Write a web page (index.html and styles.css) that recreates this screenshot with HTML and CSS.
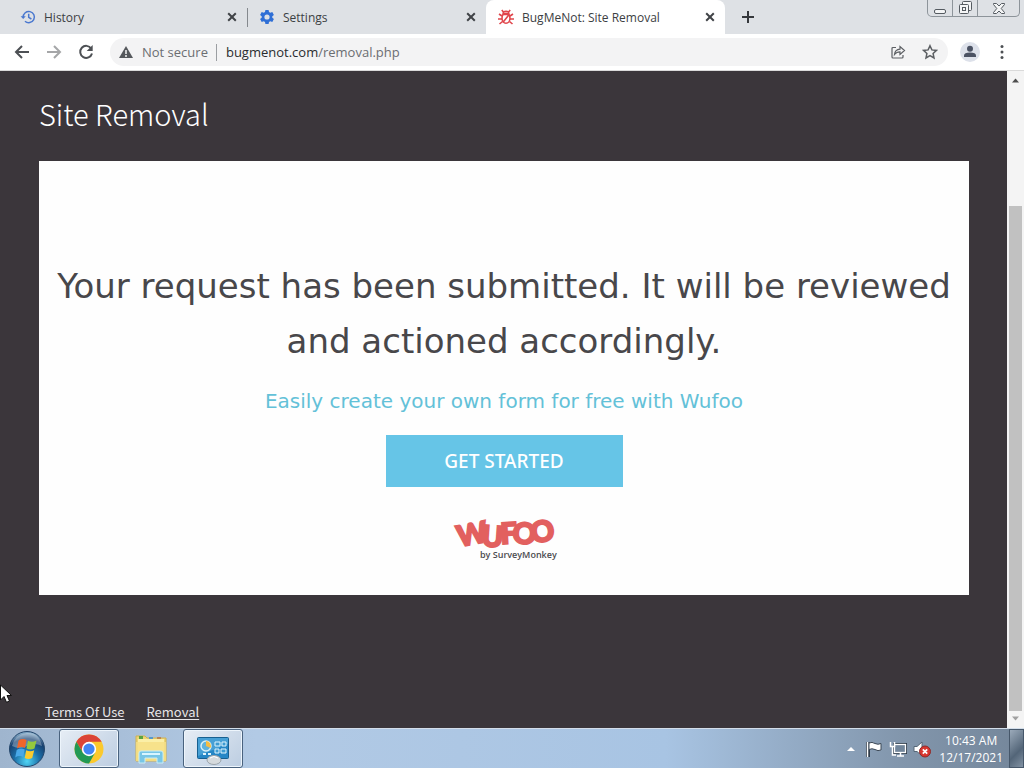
FILE: index.html
```html
<!DOCTYPE html>
<html lang="en">
<head>
<meta charset="utf-8">
<meta name="viewport" content="width=device-width, initial-scale=1">
<title>BugMeNot: Site Removal</title>
<link rel="stylesheet" href="styles.css">
</head>
<body>
<header class="browser">
  <div class="tab-strip">
    <div class="tab">
      <svg class="icon" viewBox="0 0 16 16" fill="none" stroke="#4a78cf" stroke-width="1.5"><path d="M3.2 8.3a5.6 5.6 0 1 1 1.8 3.9"/><path d="M.6 7.2h5.2L3.2 10z" fill="#4a78cf" stroke="none"/><path d="M8.7 4.8v3.6l2.7 1.6"/></svg>
      <span class="tab-title">History</span>
      <button class="close" aria-label="Close History"><svg viewBox="0 0 10 10"><path d="M1.2 1.2l7.6 7.6M8.8 1.2L1.2 8.8"/></svg></button>
    </div>
    <div class="tab divided">
      <svg class="icon" viewBox="0 0 16 16"><path fill="#2f6fd6" fill-rule="evenodd" d="M6.4 1h3.2l.4 2 1.3.8 2-.7 1.6 2.8-1.6 1.3v1.6l1.6 1.3-1.6 2.8-2-.7-1.3.8-.4 2H6.400l-.4-2-1.300-.8-2 .7-1.600-2.800 1.600-1.300V7.200L1.100 5.900l1.600-2.800 2 .7L6 3zM8 5.400a2.600 2.600 0 1 0 0 5.200 2.600 2.600 0 0 0 0-5.200z"/></svg>
      <span class="tab-title">Settings</span>
      <button class="close" aria-label="Close Settings"><svg viewBox="0 0 10 10"><path d="M1.2 1.2l7.6 7.6M8.8 1.2L1.2 8.8"/></svg></button>
    </div>
    <div class="tab active">
      <svg class="icon" viewBox="0 0 16 16" fill="none" stroke="#e0454b" stroke-width="1.600"><ellipse cx="8" cy="9.300" rx="4" ry="5"/><path d="M5 5.500Q5 2.300 8 2.300t3 3.200zM5.200 2.800L3.800 1M10.800 2.800L12.200 1M4 7L1 5M4 10H0M4.500 12.500L1.500 15M12 7l3-2M12 10h4M11.500 12.500l3 2.500M10.800 6l-5.600 7"/></svg>
      <span class="tab-title">BugMeNot: Site Removal</span>
      <button class="close" aria-label="Close BugMeNot"><svg viewBox="0 0 10 10"><path d="M1.2 1.2l7.6 7.6M8.8 1.2L1.2 8.8"/></svg></button>
    </div>
    <button class="new-tab" aria-label="New tab"><svg viewBox="0 0 14 14"><path d="M7 1v12M1 7h12" stroke="#35383c" stroke-width="2"/></svg></button>
    <div class="window-controls">
      <button aria-label="Minimize"><svg viewBox="0 0 14 14"><rect x="1.500" y="8.500" width="11" height="4" rx="1.500"/></svg></button>
      <button aria-label="Restore"><svg viewBox="0 0 14 14"><path d="M4.500 3.500v-2q0-1 1-1h7q1 0 1 1v7q0 1-1 1h-2"/><rect x="1.500" y="3.500" width="9" height="9" rx="1"/><rect x="4.500" y="6.500" width="3" height="3"/></svg></button>
      <button class="wide" aria-label="Close window"><svg viewBox="0 0 14 14"><path d="M1.500 2.500h3L7 5l2.500-2.500h3v1L9.200 7.500l3.300 4v1h-3L7 10l-2.500 2.500h-3v-1l3.300-4-3.300-4z"/></svg></button>
    </div>
  </div>
  <div class="toolbar">
    <nav class="nav-buttons">
      <button aria-label="Back"><svg viewBox="0 0 16 16"><path d="M15 8H2M8 2L2 8l6 6"/></svg></button>
      <button class="disabled" aria-label="Forward"><svg viewBox="0 0 16 16"><path d="M1 8h13M8 2l6 6-6 6"/></svg></button>
      <button aria-label="Reload"><svg viewBox="0 0 16 16"><path d="M13.200 4.500A6 6 0 1 0 14 9.500"/><path d="M14.700 1v6h-6z" fill="#4d5054" stroke="none"/></svg></button>
    </nav>
    <div class="omnibox">
      <svg class="warn" viewBox="0 0 14 14"><path d="M7 1l7 12H0z" fill="#55585c"/><path d="M7 5v4M7 10v2" stroke="#fff" stroke-width="1.400"/></svg>
      <span class="insecure">Not secure</span>
      <span class="url">bugmenot.com<span class="path">/removal.php</span></span>
      <button aria-label="Share"><svg viewBox="0 0 16 16"><path d="M6 3.500H3q-1 0-1 1V13q0 1 1 1h9q1 0 1-1v-2M4.500 10.500Q5 5.500 10 5.200V2.500l4.500 4-4.500 4V7.800Q6.500 7.800 4.500 10.500z" stroke-width="1.200"/></svg></button>
      <button aria-label="Bookmark"><svg viewBox="0 0 16 16"><path d="M8 1.700l1.900 4.200 4.600.5-3.400 3.100.9 4.500L8 11.700 4 14l.9-4.500L1.500 6.400l4.600-.5z" stroke-width="1.500"/></svg></button>
    </div>
    <button class="profile" aria-label="Profile"><svg viewBox="0 0 20 20"><circle cx="10" cy="6.800" r="3"/><path d="M4 15v-1.500q0-3 6-3t6 3V15z"/></svg></button>
    <button class="more" aria-label="Menu"><svg viewBox="0 0 4 16"><circle cx="2" cy="2.500" r="1.500"/><circle cx="2" cy="8" r="1.500"/><circle cx="2" cy="13.500" r="1.500"/></svg></button>
  </div>
</header>

<div class="viewport">
  <main class="page">
    <h1>Site Removal</h1>
    <section class="card">
      <h2>Your request has been submitted. It will be reviewed and actioned accordingly.</h2>
      <a class="promo" href="#">Easily create your own form for free with Wufoo</a>
      <button class="start">GET STARTED</button>
      <svg class="wufoo" viewBox="0 0 104 46" role="img" aria-label="Wufoo by SurveyMonkey">
        <g class="letters">
          <text transform="translate(7 29) rotate(-11)">W</text>
          <text transform="translate(29 28) rotate(4)">U</text>
          <text transform="translate(49 26) rotate(-3)">F</text>
          <text transform="translate(60 25) rotate(4)">O</text>
          <text transform="translate(80 25) rotate(-7)">O</text>
        </g>
        <text class="byline" x="28" y="40">by SurveyMonkey</text>
      </svg>
    </section>
    <footer class="links"><a href="#">Terms Of Use</a><a href="#">Removal</a></footer>
  </main>
  <div class="scrollbar" aria-hidden="true">
    <svg viewBox="0 0 9 9"><path d="M1 6.500L4.500 2.500 8 6.500z" fill="#4e4e4e"/></svg>
    <span class="thumb"></span>
    <svg viewBox="0 0 9 9"><path d="M1 2.500l3.500 4L8 2.500z" fill="#a0a0a0"/></svg>
  </div>
</div>

<footer class="taskbar">
  <button class="orb" aria-label="Start"><svg viewBox="0 0 38 38">
    <defs><radialGradient id="orb" cx=".5" cy=".85" r=".8"><stop offset="0" stop-color="#4fd5f5"/><stop offset=".45" stop-color="#1c6fa8"/><stop offset=".8" stop-color="#17406f"/><stop offset="1" stop-color="#7fa6c4"/></radialGradient></defs>
    <circle cx="19" cy="19" r="17.500" fill="url(#orb)" stroke="#24466b"/>
    <path d="M4 16Q7 4 19 3t15 13Q26 12 19 16T4 16z" fill="#fff" opacity=".3"/>
    <path d="M10.500 10.500q4-2.500 8-.5l-1.500 8q-4-2-8 .5z" fill="#f0652a"/><path d="M20 10.800q4 2 8.500-.3l-2 8q-4 2.200-8 0z" fill="#94c93d"/><path d="M8.700 20q4-2.500 8-.5l-1.500 7.500q-4-2-8 .5z" fill="#49a8e8"/><path d="M18.200 20.300q4 2 8 0l-2 7.700q-4 2-7.500 0z" fill="#fccb2e"/></svg></button>
  <button class="task open" aria-label="Chrome"><svg viewBox="0 0 32 32"><circle cx="16" cy="16" r="14.500" fill="#fbc92d"/><path d="M3.400 8.800A14.500 14.500 0 0 1 28.600 8.800H16L9.800 19.600z" fill="#db4437"/><path d="M3.400 8.800A14.500 14.500 0 0 0 16 30.500L22.200 19.600H9.800z" fill="#229955"/><circle cx="16" cy="16" r="7.200" fill="#fff"/><circle cx="16" cy="16" r="5.600" fill="#4285f4"/></svg></button>
  <button class="task" aria-label="File Explorer"><svg viewBox="0 0 32 32"><path d="M1 3h9l2 2h19v23H1z" fill="#ecd575" stroke="#cfb252"/><path d="M3 6h26v20H3z" fill="#fbefa7"/><path d="M4 3h4v3H4z" fill="#59a33f"/><path d="M14 4h4v2h-4z" fill="#5598cb"/><path d="M22 4h4v2h-4z" fill="#bd8453"/><path d="M1 9h30v19H1z" fill="#f6df86" opacity=".85"/><path d="M4 30V20q0-2 2-2h20q2 0 2 2v10h-6v-5H10v5z" fill="#78c6e6" stroke="#c9edf6"/><path d="M7 21h18" stroke="#d8f5ff" stroke-width="2"/></svg></button>
  <button class="task open" aria-label="Control Panel"><svg viewBox="0 0 32 32"><rect x=".5" y="4.500" width="31" height="21" rx="1" fill="#2687c6" stroke="#176090"/><path d="M1 5h30v6L1 23z" fill="#68b9e4" opacity=".5"/><circle cx="9" cy="13" r="5" fill="#60b3dc" stroke="#d9f0f8" stroke-width="1.500"/><path d="M9 13V8a5 5 0 0 1 4.500 7z" fill="#f6bd42"/><path d="M18 9h5v4h-5zM25 9h4v4h-4zM18 16h4v4h-4zM24 16h5v4h-5z" fill="#3c9bd2" stroke="#dff4fc"/><path d="M6 21h3M11 21h3" stroke="#dff4fc" stroke-width="2"/><ellipse cx="17" cy="27" rx="7" ry="4.500" fill="#d5dadd" stroke="#9aa3aa"/><path d="M13 25q4-3 8 0" stroke="#fff" fill="none"/></svg></button>
  <div class="tray">
    <svg class="up" viewBox="0 0 8 8"><path d="M0 6l4-4 4 4z" fill="#fff"/></svg>
    <svg viewBox="0 0 18 18"><path d="M3 2v15" stroke="#2e3b49" stroke-width="4"/><path d="M4 3q3-1.500 6 .5 3 1.500 6 0v6.500q-3 1.500-6-.5-3-1.500-6 0z" fill="#fff" stroke="#3b4856"/><path d="M2.500 2v15" stroke="#fff" stroke-width="1.500"/></svg>
    <svg viewBox="0 0 18 18"><rect x="5.500" y="4.500" width="11" height="8" fill="#52667a" stroke="#2e3b49" stroke-width="3"/><rect x="5.500" y="4.500" width="11" height="8" fill="#71859a" stroke="#fff" stroke-width="1.300"/><path d="M8 16h7M11.500 13v3M1.500 2v4.500h4V2M3.500 6.500V15H7" stroke="#fff" stroke-width="1.500" fill="none"/></svg>
    <svg viewBox="0 0 18 18"><path d="M1 6.500h3L9 2v14l-5-4.500H1z" fill="#fff" stroke="#566777"/><circle cx="12" cy="11.500" r="5.500" fill="#d8362f" stroke="#8e2b29"/><path d="M9.800 9.300l4.400 4.400M14.200 9.300l-4.400 4.400" stroke="#fff" stroke-width="1.700"/></svg>
    <div class="clock"><time>10:43 AM</time><time>12/17/2021</time></div>
    <button class="desktop" aria-label="Show desktop"></button>
  </div>
</footer>
<svg class="cursor" viewBox="0 0 12 20" aria-hidden="true"><path d="M.5 1v15l3.500-3.500 2.500 5.800 3-1.300L7 11.500h4.500z" fill="#fff" stroke="#111"/></svg>
</body>
</html>
```

FILE: styles.css
```css
* { box-sizing: border-box; }
body {
  margin: 0;
  min-height: 100vh;
  display: flex;
  flex-direction: column;
  font-family: "Open Sans", "Noto Sans", sans-serif;
  font-size: 12px;
  color: #3c4043;
}
button { border: 0; padding: 0; margin: 0; background: none; font: inherit; color: inherit; }
svg { display: block; flex: none; }

/* Tab strip */
.tab-strip { display: flex; height: 34px; padding-left: 8px; background: #dee1e5; }
.tab { display: flex; align-items: center; flex: 0 1 239px; min-width: 0; padding: 0 10px 0 12px; gap: 8px; position: relative; }
.tab.divided::before { content: ""; position: absolute; left: 0; top: 8px; height: 19px; border-left: 1px solid #85898e; }
.tab.active { background: #fff; border-radius: 8px 8px 0 0; }
.icon { width: 16px; height: 16px; }
.tab-title { flex: 1; overflow: hidden; white-space: nowrap; }
.close svg { width: 10px; height: 10px; stroke: #404347; stroke-width: 2; }
.new-tab { padding: 0 16px; }
.new-tab svg { width: 14px; height: 14px; }
.window-controls { display: flex; height: 17px; margin: 0 4px 0 auto; border: 1px solid #8d949a; border-top: 0; border-radius: 0 0 5px 5px; }
.window-controls button { width: 25px; display: grid; place-items: center; border-right: 1px solid #8d949a; }
.window-controls .wide { width: 41px; border: 0; }
.window-controls svg { width: 14px; height: 14px; fill: #f4f5f6; stroke: #555b61; }

/* Toolbar */
.toolbar { display: flex; align-items: center; height: 37px; padding: 0 20px 0 14px; background: #fff; border-bottom: 1px solid #dadada; }
.nav-buttons { display: flex; gap: 16px; margin-right: 16px; }
.nav-buttons svg { width: 16px; height: 16px; fill: none; stroke: #4d5054; stroke-width: 2; }
.nav-buttons .disabled { opacity: .5; }
.omnibox { display: flex; align-items: center; flex: 1; height: 28px; padding: 0 10px 0 9px; border-radius: 14px; background: #f3f3f4; font-size: 13px; }
.warn { width: 14px; height: 14px; margin-right: 9px; }
.insecure { color: #6b6e72; padding-right: 8px; border-right: 1px solid #9b9ea2; line-height: 17px; }
.url { flex: 1; padding-left: 9px; color: #2a2c2f; }
.path { color: #6b6e72; }
.omnibox button svg { width: 16px; height: 16px; fill: none; stroke: #5c5f63; }
.omnibox button { margin-left: 16px; }
.profile { margin: 0 20px 0 12px; border-radius: 50%; background: #dde1ea; }
.profile svg { width: 20px; height: 20px; fill: #4b5263; }
.more svg { width: 4px; height: 16px; fill: #4d5054; }

/* Page */
.viewport { display: flex; flex: 1; }
.page { flex: 1; display: flex; flex-direction: column; padding: 22px 38px 6px 39px; background: #3b363b; }
h1 { margin: 0 0 28px; font: 300 29px/40px "Noto Sans CJK SC", "Open Sans", sans-serif; color: #fff; }
.card { display: flex; flex-direction: column; align-items: center; padding: 98px 12px 31px; background: #fefefe; text-align: center; }
h2 { margin: 0 0 17px; font: 400 34px/55px "DejaVu Sans", sans-serif; color: #48474a; }
.promo { margin-bottom: 19px; font: 400 20px/30px "DejaVu Sans", sans-serif; color: #63c1d8; text-decoration: none; }
.start { width: 237px; height: 52px; margin-bottom: 31px; background: #66c5e7; color: #fff; font: 500 19px/30px "Noto Sans", sans-serif; }
.wufoo { width: 104px; height: 46px; overflow: visible; }
.letters { font: 900 29px Lato, sans-serif; fill: #e2605f; stroke: #e2605f; stroke-width: 2px; }
.byline { font: 600 9px "Open Sans", sans-serif; fill: #4b4b4f; }
.links { display: flex; gap: 22px; margin-top: auto; padding-left: 6px; font: 13px/21px "Noto Sans CJK SC", "Open Sans", sans-serif; }
.links a { color: #e7e5e7; text-underline-offset: 2px; }
.scrollbar { width: 17px; display: flex; flex-direction: column; align-items: center; padding: 5px 0; background: #f4f4f4; }
.scrollbar svg { width: 9px; height: 9px; }
.thumb { flex: 1; width: 13px; margin: 121px 0 3px; background: #c1c1c1; }

/* Taskbar */
.taskbar { display: flex; height: 40px; padding-left: 8px; border-top: 1px solid #d3deea; background: linear-gradient(90deg, #9fb5ce, #b2cae5 25%, #a8c4e3 65%, #8296ac 88%, #74869a); }
.orb { margin-right: 13px; }
.orb svg { width: 38px; height: 38px; }
.task { display: grid; place-items: center; width: 60px; margin-right: 2px; border-radius: 3px; }
.task.open { border: 1px solid #49627e; box-shadow: inset 0 0 0 1px #edf5fc; background: linear-gradient(135deg, #e6edf5, #bccde1); }
.task svg { width: 32px; height: 32px; }
.tray { display: flex; align-items: center; gap: 6px; margin-left: auto; color: #fff; }
.tray svg { width: 18px; height: 18px; }
.tray .up { width: 8px; height: 8px; margin-right: 4px; }
.clock { display: flex; flex-direction: column; align-items: center; padding-left: 2px; line-height: 17px; }
.desktop { align-self: stretch; width: 15px; border: 1px solid #46576a; background: linear-gradient(135deg, #9baaba, #536578 60%, #8292a3); }
.cursor { position: absolute; left: 0; top: 684px; width: 12px; height: 20px; }
```
